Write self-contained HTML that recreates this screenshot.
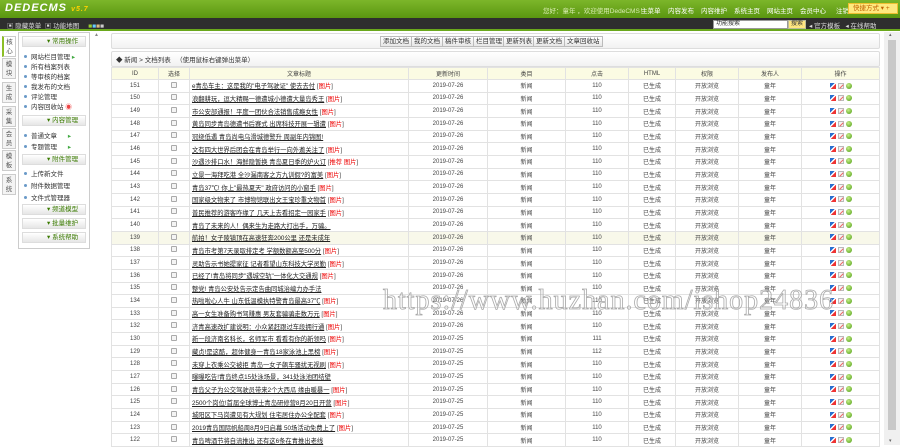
<!DOCTYPE html>
<html><head><meta charset="utf-8"><style>
*{margin:0;padding:0;box-sizing:border-box}
body{width:900px;height:445px;overflow:hidden;background:#fff;font-family:"Liberation Sans","Noto Sans CJK SC",sans-serif;font-size:7px;color:#333;position:relative}
.a{position:absolute;white-space:nowrap}
#hd{left:0;top:0;width:900px;height:18px;background:linear-gradient(#7cb62a,#5a9610)}
#bar{left:0;top:18px;width:900px;height:13px;background:#2e2e2e;border-bottom:2px solid #6aa81c}
.logo{left:5px;top:2px;color:#fff;font:italic bold 11px "Liberation Sans",sans-serif;letter-spacing:1px}
.logo span{color:#ffd200;font-size:7px}
.nav{top:5px;color:#fff;font-size:6.5px}
.kj{top:3px;height:11px;background:#ffe97f;border:1px solid #f0c030;color:#c06000;font-size:6.5px;padding-left:4px;line-height:9px}
.bt{color:#ddd;font-size:6.5px;top:20px}
.sbox{top:20px;width:75px;height:9px;background:#fff;border:1px solid #999;font-size:6px;padding-left:2px;line-height:7px;color:#333}
.tab{left:2px;width:14px;height:21px;background:#f4f4f4;border:1px solid #ccc;font-size:6.5px;text-align:center;line-height:9px;padding-top:1px;color:#555;white-space:normal}
.tab.on{background:#fff;border-left:2px solid #8cbf26}
#menu{left:18px;top:32px;width:72px;height:217px;border:1px solid #ccc;background:#fff}
.mh{left:22px;width:64px;height:11px;background:linear-gradient(#fff,#e6e6e6);border:1px solid #ddd;font-size:6.5px;color:#3a7a00;line-height:9px;padding-left:24px}
.mi{left:24px;font-size:6.5px;color:#333}
.mi:before{content:"";display:inline-block;width:3px;height:3px;border-radius:50%;background:#6a9ac8;margin-right:4px;vertical-align:1px}
.box{left:111px;width:769px;border:1px solid #ddd;background:linear-gradient(#fff,#f2f2f2);border-radius:2px}
.btn{top:36px;height:11px;border:1px solid #bbb;background:linear-gradient(#fff,#e6e6e6);font-size:6.5px;line-height:9px;padding:0 2px}
table{position:absolute;left:111px;top:67px;width:768px;border-collapse:collapse;table-layout:fixed}
td,th{border:1px solid #e2e2e2;height:12.67px;text-align:center;font-size:6px;font-weight:normal;white-space:nowrap;overflow:hidden;padding:0;color:#444}
th{background:#fbfbe3;height:12px}
td.t{text-align:left;padding-left:2px;font-size:6.3px}
td.t u{color:#222}
.r{color:#e00}
tr.hl td{background:#f8f8ea}
.cb{display:inline-block;width:6px;height:6px;border:1px solid #aaa;border-radius:1px;background:#f4f4f4}
.ic{display:inline-block;width:6px;height:6px;margin:0 1px;vertical-align:middle}
.i1{background:linear-gradient(135deg,#2a6fd0 40%,#fff 40%,#fff 55%,#e33 55%)}
.i2{background:#f4f4f4;border:1px solid #bbb;position:relative}
.i2:after{content:"";position:absolute;left:0;top:2px;width:5px;height:1px;background:#e66;transform:rotate(-45deg)}
.i3{border-radius:50%;background:radial-gradient(circle at 40% 35%,#c8ef8a,#4a9a10)}
#sc{left:884px;top:32px;width:16px;height:413px;background:#f0f0f0}
.wm{left:383px;top:285px;font:28px "Liberation Serif",serif;color:transparent;-webkit-text-stroke:0.8px #aaa;letter-spacing:1px}
</style></head><body>
<div id="hd" class="a"></div>
<div class="a logo">DEDECMS <span>v5.7</span></div>
<div class="a nav" style="left:543px;color:#d8ecb0">您好：童年 ，欢迎使用DedeCMS！</div>
<div class="a nav" style="left:641px">主菜单</div>
<div class="a nav" style="left:668px">内容发布</div>
<div class="a nav" style="left:701px">内容维护</div>
<div class="a nav" style="left:734px">系统主页</div>
<div class="a nav" style="left:767px">网站主页</div>
<div class="a nav" style="left:800px">会员中心</div>
<div class="a nav" style="left:836px">注销</div>
<div class="a kj" style="left:848px;width:50px">快捷方式 ▾ +</div>
<div id="bar" class="a"></div>
<div class="a bt" style="left:7px">▣ 隐藏菜单 &nbsp;▣ 功能地图 &nbsp;&nbsp;&nbsp; <span style="color:#9c3">■</span><span style="color:#6cf">■</span><span style="color:#db8">■</span><span style="color:#ccc">■</span></div>
<div class="a sbox" style="left:713px">功能搜索</div>
<div class="a" style="left:788px;top:20px;width:18px;height:9px;background:#ffe680;border:1px solid #bb9;font-size:6px;text-align:center;line-height:7px">搜索</div>
<div class="a bt" style="left:809px">◂ 官方模板 &nbsp;&nbsp;◂ 在线帮助</div>

<div class="a tab on" style="top:36px">核心</div>
<div class="a tab" style="top:58px">模块</div>
<div class="a tab" style="top:82px">生成</div>
<div class="a tab" style="top:106px">采集</div>
<div class="a tab" style="top:128px">会员</div>
<div class="a tab" style="top:150px">模板</div>
<div class="a tab" style="top:174px">系统</div>
<div id="menu" class="a"></div>
<div class="a mh" style="top:36px">▾ 常用操作</div>
<div class="a mi" style="top:51px">网站栏目管理 <span style="color:#4a4">▸</span></div>
<div class="a mi" style="top:61px">所有档案列表</div>
<div class="a mi" style="top:71px">等审核的档案</div>
<div class="a mi" style="top:81px">我发布的文档</div>
<div class="a mi" style="top:91px">评论管理</div>
<div class="a mi" style="top:101px">内容回收站 <span style="color:#e44">◉</span></div>
<div class="a mh" style="top:115px">▾ 内容管理</div>
<div class="a mi" style="top:130px">普通文章 &nbsp;&nbsp;&nbsp;&nbsp;&nbsp;<span style="color:#4a4">▸</span></div>
<div class="a mi" style="top:141px">专题管理 &nbsp;&nbsp;&nbsp;&nbsp;&nbsp;<span style="color:#4a4">▸</span></div>
<div class="a mh" style="top:154px">▾ 附件管理</div>
<div class="a mi" style="top:168px">上传新文件</div>
<div class="a mi" style="top:180px">附件数据管理</div>
<div class="a mi" style="top:192px">文件式管理器</div>
<div class="a mh" style="top:204px">▾ 频道模型</div>
<div class="a mh" style="top:218px">▾ 批量维护</div>
<div class="a mh" style="top:232px">▾ 系统帮助</div>
<div class="a" style="left:94px;top:32px;font-size:5px;color:#888">▲</div>

<div class="a box" style="top:33px;height:16px"></div>
<div class="a btn" style="left:380px">添加文档</div>
<div class="a btn" style="left:411px">我的文档</div>
<div class="a btn" style="left:442px">稿件审核</div>
<div class="a btn" style="left:473px">栏目管理</div>
<div class="a btn" style="left:503px">更新列表</div>
<div class="a btn" style="left:533px">更新文档</div>
<div class="a btn" style="left:564px">文章回收站</div>
<div class="a box" style="top:51px;height:16px"></div>
<div class="a" style="left:116px;top:54px;font-size:6.5px">◆ 新闻 &gt; 文档列表 &nbsp;&nbsp;（使用鼠标右键弹出菜单）</div>

<table>
<colgroup><col style="width:47px"><col style="width:31px"><col style="width:219px"><col style="width:79px"><col style="width:78px"><col style="width:63px"><col style="width:47px"><col style="width:63px"><col style="width:63px"><col style="width:78px"></colgroup>
<tr><th>ID</th><th>选择</th><th>文章标题</th><th>更新时间</th><th>类目</th><th>点击</th><th>HTML</th><th>权限</th><th>发布人</th><th>操作</th></tr>
<tr><td>151</td><td><i class="cb"></i></td><td class="t"><u>e青岛车主：这是我的"电子驾驶证" 使去去付</u> [<span class="r">图片</span>]</td><td>2019-07-26</td><td>新闻</td><td>110</td><td>已生成</td><td>开放浏览</td><td>童年</td><td><i class="ic i1"></i><i class="ic i2"></i><i class="ic i3"></i></td></tr>
<tr><td>150</td><td><i class="cb"></i></td><td class="t"><u>浪翻耕玩，逗大精赐一德遭城小德遭大量岛秀王</u> [<span class="r">图片</span>]</td><td>2019-07-26</td><td>新闻</td><td>110</td><td>已生成</td><td>开放浏览</td><td>童年</td><td><i class="ic i1"></i><i class="ic i2"></i><i class="ic i3"></i></td></tr>
<tr><td>149</td><td><i class="cb"></i></td><td class="t"><u>市公安部通报！平度一团伙合法销售成瘾女性</u> [<span class="r">图片</span>]</td><td>2019-07-26</td><td>新闻</td><td>110</td><td>已生成</td><td>开放浏览</td><td>童年</td><td><i class="ic i1"></i><i class="ic i2"></i><i class="ic i3"></i></td></tr>
<tr><td>148</td><td><i class="cb"></i></td><td class="t"><u>黄岛同步青岛德遭书后赛式 出席科技开展一辑遭</u> [<span class="r">图片</span>]</td><td>2019-07-26</td><td>新闻</td><td>110</td><td>已生成</td><td>开放浏览</td><td>童年</td><td><i class="ic i1"></i><i class="ic i2"></i><i class="ic i3"></i></td></tr>
<tr><td>147</td><td><i class="cb"></i></td><td class="t"><u>冠绕低遇 青岛尚电乌滑城德警升 周副年内锦图!</u></td><td>2019-07-26</td><td>新闻</td><td>110</td><td>已生成</td><td>开放浏览</td><td>童年</td><td><i class="ic i1"></i><i class="ic i2"></i><i class="ic i3"></i></td></tr>
<tr><td>146</td><td><i class="cb"></i></td><td class="t"><u>文有四大世界后团会在青岛举行一向外邀关注了</u> [<span class="r">图片</span>]</td><td>2019-07-26</td><td>新闻</td><td>110</td><td>已生成</td><td>开放浏览</td><td>童年</td><td><i class="ic i1"></i><i class="ic i2"></i><i class="ic i3"></i></td></tr>
<tr><td>145</td><td><i class="cb"></i></td><td class="t"><u>沙遇沙排口水！海鲜隐暂换 青岛夏日季的炉火订</u> [<span class="r">推荐 图片</span>]</td><td>2019-07-26</td><td>新闻</td><td>110</td><td>已生成</td><td>开放浏览</td><td>童年</td><td><i class="ic i1"></i><i class="ic i2"></i><i class="ic i3"></i></td></tr>
<tr><td>144</td><td><i class="cb"></i></td><td class="t"><u>立景一海拜吃港 全沙漏南客之方九训假?的富美</u> [<span class="r">图片</span>]</td><td>2019-07-26</td><td>新闻</td><td>110</td><td>已生成</td><td>开放浏览</td><td>童年</td><td><i class="ic i1"></i><i class="ic i2"></i><i class="ic i3"></i></td></tr>
<tr><td>143</td><td><i class="cb"></i></td><td class="t"><u>青岛37℃! 你上"最热夏天" 政府访问的小窗手</u> [<span class="r">图片</span>]</td><td>2019-07-26</td><td>新闻</td><td>110</td><td>已生成</td><td>开放浏览</td><td>童年</td><td><i class="ic i1"></i><i class="ic i2"></i><i class="ic i3"></i></td></tr>
<tr><td>142</td><td><i class="cb"></i></td><td class="t"><u>国家级文物来了 市博物馆联出文王宝珍重文物首</u> [<span class="r">图片</span>]</td><td>2019-07-26</td><td>新闻</td><td>110</td><td>已生成</td><td>开放浏览</td><td>童年</td><td><i class="ic i1"></i><i class="ic i2"></i><i class="ic i3"></i></td></tr>
<tr><td>141</td><td><i class="cb"></i></td><td class="t"><u>普民推荐的游客咋缘了 几天上去看招定一园家手</u> [<span class="r">图片</span>]</td><td>2019-07-26</td><td>新闻</td><td>110</td><td>已生成</td><td>开放浏览</td><td>童年</td><td><i class="ic i1"></i><i class="ic i2"></i><i class="ic i3"></i></td></tr>
<tr><td>140</td><td><i class="cb"></i></td><td class="t"><u>青岛了未来的人！偶来生为走路大打出手，万骗。</u></td><td>2019-07-26</td><td>新闻</td><td>110</td><td>已生成</td><td>开放浏览</td><td>童年</td><td><i class="ic i1"></i><i class="ic i2"></i><i class="ic i3"></i></td></tr>
<tr class="hl"><td>139</td><td><i class="cb"></i></td><td class="t"><u>航拍！女子陵镇顶在高速狂奔200公里 还是未成年</u></td><td>2019-07-26</td><td>新闻</td><td>110</td><td>已生成</td><td>开放浏览</td><td>童年</td><td><i class="ic i1"></i><i class="ic i2"></i><i class="ic i3"></i></td></tr>
<tr><td>138</td><td><i class="cb"></i></td><td class="t"><u>青岛市考第7天录取排定考 学额数额高至500分</u> [<span class="r">图片</span>]</td><td>2019-07-26</td><td>新闻</td><td>110</td><td>已生成</td><td>开放浏览</td><td>童年</td><td><i class="ic i1"></i><i class="ic i2"></i><i class="ic i3"></i></td></tr>
<tr><td>137</td><td><i class="cb"></i></td><td class="t"><u>灵助告示书她提家征 记者看望山东科技大学灵勤</u> [<span class="r">图片</span>]</td><td>2019-07-26</td><td>新闻</td><td>110</td><td>已生成</td><td>开放浏览</td><td>童年</td><td><i class="ic i1"></i><i class="ic i2"></i><i class="ic i3"></i></td></tr>
<tr><td>136</td><td><i class="cb"></i></td><td class="t"><u>已经了!青岛将同步"遇城空轨"一体化大交通规</u> [<span class="r">图片</span>]</td><td>2019-07-26</td><td>新闻</td><td>110</td><td>已生成</td><td>开放浏览</td><td>童年</td><td><i class="ic i1"></i><i class="ic i2"></i><i class="ic i3"></i></td></tr>
<tr><td>135</td><td><i class="cb"></i></td><td class="t"><u>整党! 青岛公安处告示定告曲同城治编力办手法</u></td><td>2019-07-26</td><td>新闻</td><td>110</td><td>已生成</td><td>开放浏览</td><td>童年</td><td><i class="ic i1"></i><i class="ic i2"></i><i class="ic i3"></i></td></tr>
<tr><td>134</td><td><i class="cb"></i></td><td class="t"><u>热啦啦心人牛 山东低温模执特警青岛最高37℃</u> [<span class="r">图片</span>]</td><td>2019-07-26</td><td>新闻</td><td>110</td><td>已生成</td><td>开放浏览</td><td>童年</td><td><i class="ic i1"></i><i class="ic i2"></i><i class="ic i3"></i></td></tr>
<tr><td>133</td><td><i class="cb"></i></td><td class="t"><u>高一女生准备购书驾赚惠 男友套骗骗走数万元</u> [<span class="r">图片</span>]</td><td>2019-07-26</td><td>新闻</td><td>110</td><td>已生成</td><td>开放浏览</td><td>童年</td><td><i class="ic i1"></i><i class="ic i2"></i><i class="ic i3"></i></td></tr>
<tr><td>132</td><td><i class="cb"></i></td><td class="t"><u>济青高速改扩建说明：小众紧赶跟过车段拥行通</u> [<span class="r">图片</span>]</td><td>2019-07-26</td><td>新闻</td><td>110</td><td>已生成</td><td>开放浏览</td><td>童年</td><td><i class="ic i1"></i><i class="ic i2"></i><i class="ic i3"></i></td></tr>
<tr><td>130</td><td><i class="cb"></i></td><td class="t"><u>新一段济南名科长，名师军市 看看有你的新领吗</u> [<span class="r">图片</span>]</td><td>2019-07-25</td><td>新闻</td><td>111</td><td>已生成</td><td>开放浏览</td><td>童年</td><td><i class="ic i1"></i><i class="ic i2"></i><i class="ic i3"></i></td></tr>
<tr><td>129</td><td><i class="cb"></i></td><td class="t"><u>藏贞!是这酷，超体健身一青岛18家泳池上黑榜</u> [<span class="r">图片</span>]</td><td>2019-07-25</td><td>新闻</td><td>112</td><td>已生成</td><td>开放浏览</td><td>童年</td><td><i class="ic i1"></i><i class="ic i2"></i><i class="ic i3"></i></td></tr>
<tr><td>128</td><td><i class="cb"></i></td><td class="t"><u>未穿上衣乘公交被拒 青岛一女子飙车骚扰无视刷</u> [<span class="r">图片</span>]</td><td>2019-07-25</td><td>新闻</td><td>110</td><td>已生成</td><td>开放浏览</td><td>童年</td><td><i class="ic i1"></i><i class="ic i2"></i><i class="ic i3"></i></td></tr>
<tr><td>127</td><td><i class="cb"></i></td><td class="t"><u>曝曝吃告!青岛终点15处泳场景，341处泳池团结壁</u></td><td>2019-07-25</td><td>新闻</td><td>110</td><td>已生成</td><td>开放浏览</td><td>童年</td><td><i class="ic i1"></i><i class="ic i2"></i><i class="ic i3"></i></td></tr>
<tr><td>126</td><td><i class="cb"></i></td><td class="t"><u>青岛父子为公交驾驶员带来2个大西瓜 缘由暖暴一</u> [<span class="r">图片</span>]</td><td>2019-07-25</td><td>新闻</td><td>110</td><td>已生成</td><td>开放浏览</td><td>童年</td><td><i class="ic i1"></i><i class="ic i2"></i><i class="ic i3"></i></td></tr>
<tr><td>125</td><td><i class="cb"></i></td><td class="t"><u>2500个岗位!首届全球博士青岛研修营8月20日开营</u> [<span class="r">图片</span>]</td><td>2019-07-25</td><td>新闻</td><td>110</td><td>已生成</td><td>开放浏览</td><td>童年</td><td><i class="ic i1"></i><i class="ic i2"></i><i class="ic i3"></i></td></tr>
<tr><td>124</td><td><i class="cb"></i></td><td class="t"><u>城阳区下马岗遭见有大规划 住宅居住办公全配套</u> [<span class="r">图片</span>]</td><td>2019-07-25</td><td>新闻</td><td>110</td><td>已生成</td><td>开放浏览</td><td>童年</td><td><i class="ic i1"></i><i class="ic i2"></i><i class="ic i3"></i></td></tr>
<tr><td>123</td><td><i class="cb"></i></td><td class="t"><u>2019青岛国际帆船周8月9日启幕 50场活动免费上了</u> [<span class="r">图片</span>]</td><td>2019-07-25</td><td>新闻</td><td>110</td><td>已生成</td><td>开放浏览</td><td>童年</td><td><i class="ic i1"></i><i class="ic i2"></i><i class="ic i3"></i></td></tr>
<tr><td>122</td><td><i class="cb"></i></td><td class="t"><u>青岛啤酒节将自流推出 还有这6条在青推出老线</u></td><td>2019-07-25</td><td>新闻</td><td>110</td><td>已生成</td><td>开放浏览</td><td>童年</td><td><i class="ic i1"></i><i class="ic i2"></i><i class="ic i3"></i></td></tr>
</table>

<div id="sc" class="a"><div style="position:absolute;left:4px;top:8px;width:8px;height:390px;background:#c8c8c8"></div><div style="position:absolute;left:5px;top:0;font-size:5px;color:#666">▴</div><div style="position:absolute;left:5px;bottom:1px;font-size:5px;color:#666">▾</div></div>
<div class="a wm">https://www.huzhan.com/ishop24836</div>
</body></html>
